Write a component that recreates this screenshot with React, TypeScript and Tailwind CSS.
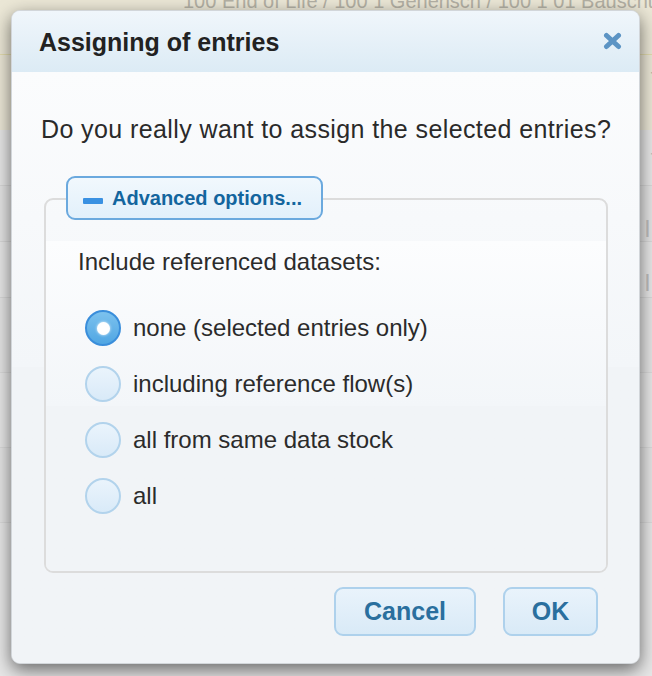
import React from "react";

function Radio({ checked }: { checked?: boolean }) {
  if (checked) {
    return (
      <span className="flex h-[36px] w-[36px] shrink-0 items-center justify-center rounded-full border-2 border-[#3a8edb] bg-gradient-to-b from-[#7cc2ee] to-[#4fa6e3]">
        <span className="h-[13px] w-[13px] rounded-full bg-white shadow-[0_0_3px_rgba(255,255,255,0.9)]" />
      </span>
    );
  }
  return (
    <span className="h-[36px] w-[36px] shrink-0 rounded-full border-2 border-[#b2d3ec] bg-gradient-to-b from-[#eaf4fc] to-[#d9eaf8]" />
  );
}

export default function App() {
  const options = [
    { label: "none (selected entries only)", checked: true },
    { label: "including reference flow(s)" },
    { label: "all from same data stock" },
    { label: "all" },
  ];
  return (
    <div
      className="relative h-[676px] w-[652px] overflow-hidden bg-[#e6e6e6]"
      style={{ fontFamily: '"Liberation Sans", Arial, sans-serif' }}
    >
      {/* background page */}
      <div className="flex h-full flex-col">
        <div className="flex h-[130px] flex-col bg-[#ebe7d6]">
          <div className="h-[55px] border-b border-[#e3dcae] pl-[183px]">
            <div className="mt-[-11px] whitespace-nowrap text-[20px] leading-[24px] text-[#b3b0a4]">
              100 End of Life / 100 1 Generisch / 100 1 01 Bauschutt
            </div>
          </div>
          <div className="flex flex-1 justify-end">
            <span className="mr-[-12px] mt-[8px] text-[24px] leading-[28px] text-[#bab7ab]">tt</span>
          </div>
        </div>
        <div className="flex h-[56px] items-center justify-end border-b border-[#d8d8d8] bg-[#e7e7e7]">
          <span className="mr-[-12px] text-[24px] leading-[28px] text-[#bdbdbd]">tt</span>
        </div>
        <div className="flex h-[56px] items-center justify-end border-b border-[#d8d8d8] bg-[#e4e4e4]">
          <span className="mr-[2px] mt-[30px] text-[24px] leading-[28px] text-[#bdbdbd]">l</span>
        </div>
        <div className="flex h-[56px] items-center justify-end border-b border-[#d8d8d8] bg-[#e7e7e7]">
          <span className="mr-[2px] mt-[26px] text-[24px] leading-[28px] text-[#bdbdbd]">l</span>
        </div>
        <div className="h-[75px] border-b border-[#dadada] bg-[#e4e4e4]" />
        <div className="h-[75px] border-b border-[#dadada] bg-[#e7e7e7]" />
        <div className="h-[75px] border-b border-[#dadada] bg-[#e4e4e4]" />
        <div className="flex-1 bg-[#e7e7e7]" />
      </div>

      {/* dialog */}
      <div className="absolute left-[11px] top-[10px] flex h-[654px] w-[629px] flex-col overflow-hidden rounded-[9px] border border-[#d2d6da] bg-[#f1f4f7] shadow-[0_6px_18px_rgba(0,0,0,0.55)]">
        <div className="flex h-[61px] shrink-0 items-center justify-between bg-gradient-to-b from-[#f0f6fb] to-[#dcebf5] pl-[27px] pr-[17px]">
          <span className="mt-[2px] text-[25px] font-bold leading-[29px] text-[#222]">Assigning of entries</span>
          <svg width="19" height="18" viewBox="0 0 19 18" className="mt-[-2px]">
            <path d="M3.5 3.5 L15.5 14.5 M15.5 3.5 L3.5 14.5" stroke="#5c94c4" strokeWidth="5" strokeLinecap="round" />
          </svg>
        </div>
        <div className="flex flex-1 flex-col bg-gradient-to-b from-[#fbfcfd] via-[#f3f6f9] to-[#f1f4f7] to-30%">
          <p className="mt-[43px] pl-[29px] text-[25px] leading-[29px] tracking-[0.4px] text-[#2a2a2a]">
            Do you really want to assign the selected entries?
          </p>

          <div className="relative ml-[32px] mt-[54px] h-[375px] w-[564px] rounded-[9px] border-2 border-[#dcdcdc]">
            <div className="absolute left-[20px] top-[-24px] flex h-[44px] w-[257px] items-center rounded-[9px] border-2 border-[#6ba9de] bg-gradient-to-b from-[#f1f8fd] to-[#e2f0fb] pl-[15px]">
              <span className="mt-[6px] h-[6px] w-[20px] rounded-[1px] bg-[#3a91e2]" />
              <span className="ml-[9px] text-[20px] font-bold leading-[24px] text-[#13659e]">Advanced options...</span>
            </div>
            <div className="mt-[41px] flex h-[330px] flex-col rounded-b-[7px] bg-gradient-to-b from-[#fcfdfe] via-[#f3f6f9] to-[#f1f4f7] to-40% pl-[32px]">
              <p className="mt-[7px] text-[24px] leading-[28px] text-[#2b2b2b]">Include referenced datasets:</p>
              <div className="mt-[34px] flex flex-col gap-[20px] pl-[7px]">
                {options.map((o) => (
                  <div key={o.label} className="flex h-[36px] items-center gap-[12px]">
                    <Radio checked={o.checked} />
                    <span className="text-[24px] leading-[28px] text-[#2b2b2b]">{o.label}</span>
                  </div>
                ))}
              </div>
            </div>
          </div>

          <div className="mr-[41px] mt-[14px] flex justify-end gap-[27px]">
            <button className="flex h-[49px] w-[142px] items-center justify-center rounded-[9px] border-2 border-[#aed1ec] bg-gradient-to-b from-[#e9f3fb] to-[#d9eaf7] text-[25px] font-bold text-[#2a6f9e]">
              Cancel
            </button>
            <button className="flex h-[49px] w-[95px] items-center justify-center rounded-[9px] border-2 border-[#aed1ec] bg-gradient-to-b from-[#e9f3fb] to-[#d9eaf7] text-[25px] font-bold text-[#2a6f9e]">
              OK
            </button>
          </div>
        </div>
      </div>
    </div>
  );
}
